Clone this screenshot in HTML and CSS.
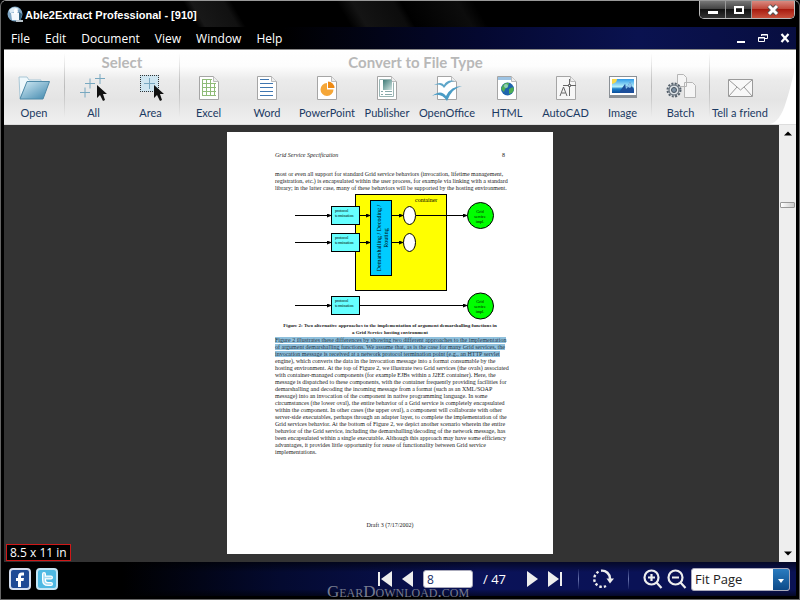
FILE: index.html
```
<!DOCTYPE html>
<html lang="en">
<head>
    <meta charset="UTF-8">
    <meta name="viewport" content="width=device-width, initial-scale=1.0">
    <title>Able2Extract Professional - [910]</title>
    <link rel="stylesheet" href="styles.css">
</head>
<body>
    <div class="window">
        <header class="title-bar">
            <svg class="app-icon" width="17" height="17" viewBox="0 0 17 17">
                <circle cx="8" cy="8" r="7.5" fill="#7fa6c4"/>
                <path d="M2 4Q7-1 12 3L8 6 3 7Z" fill="#dcebf5"/>
                <path d="M4 7h8v7H5z" fill="#f4f9fc"/>
                <path d="M7 4l2-2 2 3-1 3H7z" fill="#fff"/>
                <path d="M12 6l3 2-1 6-2 1z" fill="#35627f"/>
                <path d="M9 14h7v2H9z" fill="#b9c4cc"/>
            </svg>
            <h1>Able2Extract Professional - [910]</h1>
            <div class="window-buttons">
                <button class="win-btn" aria-label="Minimize"><svg width="12" height="12" viewBox="0 0 12 12"><path d="M1 7h10v3H1z" fill="#fff"/></svg></button>
                <button class="win-btn" aria-label="Maximize"><svg width="12" height="12" viewBox="0 0 12 12"><path d="M2 3h8v6H2z" fill="none" stroke="#fff" stroke-width="2"/></svg></button>
                <button class="win-btn win-close" aria-label="Close"><svg width="14" height="12" viewBox="0 0 14 12"><path d="M3 2l8 8M11 2l-8 8" stroke="#555" stroke-width="5"/><path d="M3 2l8 8M11 2l-8 8" stroke="#fff" stroke-width="3"/></svg></button>
            </div>
        </header>

        <nav class="menu-bar">
            <ul class="menu-list">
                <li><a href="#">File</a></li>
                <li><a href="#">Edit</a></li>
                <li><a href="#">Document</a></li>
                <li><a href="#">View</a></li>
                <li><a href="#">Window</a></li>
                <li><a href="#">Help</a></li>
            </ul>
            <div class="mdi-buttons">
                <button aria-label="Minimize document"><svg width="10" height="10" viewBox="0 0 10 10"><path d="M1 8h8v2H1z" fill="#fff"/></svg></button>
                <button aria-label="Restore document"><svg width="10" height="10" viewBox="0 0 10 10"><path d="M3.5 3V1.5h6v4H7M.5 4.5h6v4h-6zM0 5h7M3 2h7" fill="none" stroke="#fff"/></svg></button>
                <button aria-label="Close document"><svg width="10" height="10" viewBox="0 0 10 10"><path d="M1.5 1l7 8M8.5 1l-7 8" stroke="#fff" stroke-width="2.2"/></svg></button>
            </div>
        </nav>

        <div class="toolbar">
            <section class="tool-group">
                <h2></h2>
                <div class="tools">
                    <button class="tool">
                        <svg width="32" height="28" viewBox="0 0 32 28">
                            <defs><linearGradient id="folder" x1="0" y1="0" x2="1" y2="1"><stop offset="0" stop-color="#d5edf7"/><stop offset="1" stop-color="#3e86ac"/></linearGradient></defs>
                            <path d="M1 3h8l2 3h12v4H9L2 24z" fill="#eef8fc" stroke="#a9c7d6"/>
                            <path d="M9 7.5h22.5L25 25H2z" fill="url(#folder)" stroke="#4f8aa8"/>
                        </svg>
                        <span>Open</span>
                    </button>
                </div>
            </section>
            <section class="tool-group">
                <h2>Select</h2>
                <div class="tools">
                    <button class="tool narrow">
                        <svg width="32" height="28" viewBox="0 0 32 28">
                            <path d="M2 18.5h10M7 13.5v10M7 9.5h10M12 4.5v10M17 4.5h10M22 0v10" stroke="#78a8c0"/>
                            <path d="M19 11v13l3-3 3 6 2-1-2-6h4z" fill="#111"/>
                        </svg>
                        <span>All</span>
                    </button>
                    <button class="tool narrow">
                        <svg width="32" height="28" viewBox="0 0 32 28">
                            <path d="M5 1h19v17H5z" fill="#cfe6f1"/>
                            <path d="M5 1.5h19M5 17.5h19M5.5 1v17M23.5 1v17" stroke="#333" stroke-dasharray="1 1"/>
                            <path d="M9 9.5h11M14.5 4v11" stroke="#78a8c0"/>
                            <path d="M19 11v13l3-3 3 6 2-1-2-6h4z" fill="#111"/>
                        </svg>
                        <span>Area</span>
                    </button>
                </div>
            </section>
            <section class="tool-group">
                <h2>Convert to File Type</h2>
                <div class="tools">
                    <button class="tool narrow">
                        <svg width="32" height="28" viewBox="0 0 32 28">
                            <path d="M6.5 2.5h14l5 5v18h-19z" fill="#fff" stroke="#a5a5a5"/><path d="M20.5 2.5v5h5" fill="#eee" stroke="#bbb"/>
                            <path d="M9 5.5h10M9 9.5h14M9 13.5h14M9 17.5h14M9 21.5h14M9.5 5v17M13.5 5v17M17.5 5v17M21.5 9v13" stroke="#8fbb78"/>
                        </svg>
                        <span>Excel</span>
                    </button>
                    <button class="tool">
                        <svg width="32" height="28" viewBox="0 0 32 28">
                            <path d="M6.5 2.5h14l5 5v18h-19z" fill="#fff" stroke="#a5a5a5"/><path d="M20.5 2.5v5h5" fill="#eee" stroke="#bbb"/>
                            <path d="M9 5.5h9M9 9.5h13M9 13.5h13M9 17.5h13M9 21.5h13" stroke="#3f76b0"/>
                        </svg>
                        <span>Word</span>
                    </button>
                    <button class="tool">
                        <svg width="32" height="28" viewBox="0 0 32 28">
                            <path d="M6.5 2.5h14l5 5v18h-19z" fill="#fff" stroke="#a5a5a5"/><path d="M20.5 2.5v5h5" fill="#eee" stroke="#bbb"/>
                            <path d="M16 9a6.5 6.5 0 1 0 6.5 6.5H16z" fill="#f5a637"/>
                            <path d="M17 7.5V14h6.5A6.5 6.5 0 0 0 17 7.5z" fill="#ee8a14"/>
                        </svg>
                        <span>PowerPoint</span>
                    </button>
                    <button class="tool">
                        <svg width="32" height="28" viewBox="0 0 32 28">
                            <defs><linearGradient id="photo" x1="0" y1="0" x2="1" y2="1"><stop offset="0" stop-color="#3f7a77"/><stop offset="1" stop-color="#d3e5e3"/></linearGradient></defs>
                            <path d="M6.5 2.5h14l5 5v18h-19z" fill="#fff" stroke="#a5a5a5"/><path d="M20.5 2.5v5h5" fill="#eee" stroke="#bbb"/>
                            <path d="M20 5.5H8.5v17h14v-14" fill="none" stroke="#9ab5b4"/>
                            <path d="M12 6h9v10h-9z" fill="url(#photo)"/>
                            <path d="M10 17.5h2M14 17.5h7M10 20.5h2M14 20.5h7" stroke="#8aa"/>
                        </svg>
                        <span>Publisher</span>
                    </button>
                    <button class="tool">
                        <svg width="32" height="28" viewBox="0 0 32 28">
                            <path d="M6.5 2.5h14l5 5v18h-19z" fill="#fff" stroke="#a5a5a5"/><path d="M20.5 2.5v5h5" fill="#eee" stroke="#bbb"/>
                            <path d="M3 11q7-4 10 0 3-6 11-4-7 1-11 7-3-5-10-3z" fill="#5ea6c9"/>
                            <path d="M1 22q9-7 14 0 5-10 16-10-10 2-15 15-6-9-15-5z" fill="#4a9cc5"/>
                        </svg>
                        <span>OpenOffice</span>
                    </button>
                    <button class="tool">
                        <svg width="32" height="28" viewBox="0 0 32 28">
                            <path d="M6.5 2.5h14l5 5v18h-19z" fill="#fff" stroke="#a5a5a5"/><path d="M7 3h13v3H7z" fill="#9dc3e3"/><path d="M20.5 2.5v5h5" fill="#eee" stroke="#bbb"/>
                            <circle cx="16.5" cy="15" r="6.5" fill="#1e64ad"/>
                            <path d="M12 11q3-3 6-2l-1 4-3 2-1 3-3-3zM18 15l4-2q2 3-1 6l-3 1z" fill="#4fae53"/>
                            <circle cx="15" cy="12" r="2" fill="#b9e3f5" opacity=".6"/>
                        </svg>
                        <span>HTML</span>
                    </button>
                    <button class="tool narrow">
                        <svg width="32" height="28" viewBox="0 0 32 28">
                            <path d="M6.5 2.5h14l5 5v18h-19z" fill="#f7f7f7" stroke="#a5a5a5"/><path d="M20.5 2.5v5h5" fill="#eee" stroke="#bbb"/>
                            <path d="M13 11.5h13M19.5 5v17" stroke="#666"/><path d="M18.5 10.5h2v2h-2z" fill="#fff" stroke="#666"/>
                            <path d="M10 22l3.5-9 3.5 9M11.5 19h4" fill="none" stroke="#666"/>
                        </svg>
                        <span>AutoCAD</span>
                    </button>
                    <button class="tool narrow">
                        <svg width="32" height="28" viewBox="0 0 32 28">
                            <defs><linearGradient id="sky" x1="0" y1="0" x2="0" y2="1"><stop offset="0" stop-color="#2f9ae8"/><stop offset=".55" stop-color="#b5f0fa"/><stop offset=".7" stop-color="#1d7fc8"/><stop offset="1" stop-color="#0b4f9c"/></linearGradient></defs>
                            <path d="M2 2h28v22H2z" fill="#8a9096"/><path d="M3 3h26v18H3z" fill="#fff"/>
                            <path d="M5 5h22v14H5z" fill="url(#sky)"/>
                            <path d="M5 5h5q0 4-5 5z" fill="#f7d84a"/>
                            <path d="M13 17l5-7 2 3 3-5 4 8v3H13z" fill="#1d4f9b"/><path d="M18 10l2 3 3-5 2 4-2 2-2-1-2 2z" fill="#8fc5ea"/>
                        </svg>
                        <span>Image</span>
                    </button>
                </div>
            </section>
            <section class="tool-group">
                <h2></h2>
                <div class="tools">
                    <button class="tool narrow">
                        <svg width="32" height="28" viewBox="0 0 32 28">
                            <path d="M12.5.5h6l3 3v9h-9zM19.5 8.5h8l3 3v12h-11z" fill="#f5f5f5" stroke="#b5b5b5"/>
                            <circle cx="9" cy="16" r="6.5" fill="#cdd3d8" stroke="#56616c" stroke-width="2" stroke-dasharray="2 1.4"/>
                            <circle cx="9" cy="16" r="5" fill="#dde2e6" stroke="#56616c"/>
                            <circle cx="9" cy="16" r="2.5" fill="#7d90a2" stroke="#46525e"/>
                        </svg>
                        <span>Batch</span>
                    </button>
                </div>
            </section>
            <section class="tool-group">
                <h2></h2>
                <div class="tools">
                    <button class="tool">
                        <svg width="32" height="28" viewBox="0 0 32 28">
                            <path d="M4.5 5.5h24v17h-24z" fill="#f8f8f8" stroke="#9a9a9a"/>
                            <path d="M5 6l11.5 10L28 6M5 22l8-9M28 22l-8-9" fill="none" stroke="#9a9a9a"/>
                        </svg>
                        <span>Tell a friend</span>
                    </button>
                </div>
            </section>
            <svg class="toolbar-curve" width="26" height="60" viewBox="0 0 26 60"><path d="M26 0Q20 26 16 38 10 58 0 60h26z" fill="#fff"/></svg>
        </div>

        <main class="viewer">
            <div class="canvas">
                <article class="page">
                    <div class="page-header"><em>Grid Service Specification</em><span>8</span></div>
                    <p>most or even all support for standard Grid service behaviors (invocation, lifetime management,<br>
                    registration, etc.) is encapsulated within the user process, for example via linking with a standard<br>
                    library; in the latter case, many of these behaviors will be supported by the hosting environment.</p>
                    <svg class="figure" viewBox="0 0 230 130">
                        <defs><marker id="arrow" markerWidth="5" markerHeight="4" refX="4" refY="2" orient="auto" markerUnits="userSpaceOnUse"><path d="M0 0l5 2-5 2z"/></marker></defs>
                        <g stroke="#000">
                            <rect x="80.5" y="2.5" width="91" height="96" fill="#ff0"/>
                            <rect x="56.5" y="14.5" width="28" height="18" fill="#6ff"/>
                            <rect x="56.5" y="41.5" width="28" height="18" fill="#6ff"/>
                            <rect x="56.5" y="104.5" width="28" height="18" fill="#6ff"/>
                            <rect x="95.5" y="8.5" width="21" height="75" fill="#0cf"/>
                            <ellipse cx="134.5" cy="23.5" rx="6" ry="9" fill="#fff"/>
                            <ellipse cx="134.5" cy="50.5" rx="6" ry="9" fill="#fff"/>
                            <circle cx="205.5" cy="23.5" r="13" fill="#0f0"/>
                            <circle cx="205.5" cy="114" r="13" fill="#0f0"/>
                            <path d="M20 23.5h36" marker-end="url(#arrow)"/>
                            <path d="M20 50.5h36" marker-end="url(#arrow)"/>
                            <path d="M20 113.5h36" marker-end="url(#arrow)"/>
                            <path d="M85 23.5h10" marker-end="url(#arrow)"/>
                            <path d="M85 50.5h10" marker-end="url(#arrow)"/>
                            <path d="M117 23.5h11" marker-end="url(#arrow)"/>
                            <path d="M117 50.5h11" marker-end="url(#arrow)"/>
                            <path d="M141 23.5h51" marker-end="url(#arrow)"/>
                            <path d="M85 113.5h107" marker-end="url(#arrow)"/>
                        </g>
                        <text class="fig-label" x="140" y="10">container</text>
                        <g class="fig-small">
                            <text x="60" y="20">protocol</text><text x="60" y="25">termination</text>
                            <text x="60" y="47">protocol</text><text x="60" y="52">termination</text>
                            <text x="60" y="110">protocol</text><text x="60" y="115">termination</text>
                        </g>
                        <g class="fig-small" text-anchor="middle">
                            <text x="205" y="21">Grid</text><text x="205" y="26">service</text><text x="205" y="31">impl.</text>
                            <text x="205" y="111">Grid</text><text x="205" y="116">service</text><text x="205" y="121">impl.</text>
                        </g>
                        <g class="fig-label" text-anchor="middle">
                            <text transform="translate(106 46) rotate(-90)">Demarshalling / Decoding /</text>
                            <text transform="translate(113 46) rotate(-90)">Routing</text>
                        </g>
                    </svg>
                    <p class="caption">Figure 2: Two alternative approaches to the implementation of argument demarshalling functions in<br>
                    a Grid Service hosting environment</p>
                    <p><mark>Figure 2 illustrates these differences by showing two different approaches to the implementation<br>
                    of argument demarshalling functions. We assume that, as is the case for many Grid services, the<br>
                    invocation message is received at a network protocol termination point (e.g., an HTTP servlet</mark><br>
                    engine), which converts the data in the invocation message into a format consumable by the<br>
                    hosting environment. At the top of Figure 2, we illustrate two Grid services (the ovals) associated<br>
                    with container-managed components (for example EJBs within a J2EE container). Here, the<br>
                    message is dispatched to these components, with the container frequently providing facilities for<br>
                    demarshalling and decoding the incoming message from a format (such as an XML/SOAP<br>
                    message) into an invocation of the component in native programming language. In some<br>
                    circumstances (the lower oval), the entire behavior of a Grid service is completely encapsulated<br>
                    within the component. In other cases (the upper oval), a component will collaborate with other<br>
                    server-side executables, perhaps through an adapter layer, to complete the implementation of the<br>
                    Grid services behavior. At the bottom of Figure 2, we depict another scenario wherein the entire<br>
                    behavior of the Grid service, including the demarshalling/decoding of the network message, has<br>
                    been encapsulated within a single executable. Although this approach may have some efficiency<br>
                    advantages, it provides little opportunity for reuse of functionality between Grid service<br>
                    implementations.</p>
                    <div class="page-footer">Draft 3 (7/17/2002)</div>
                </article>
                <div class="page-size">8.5 x 11 in</div>
            </div>
            <div class="scrollbar">
                <button aria-label="Scroll up"><svg width="8" height="5" viewBox="0 0 8 5"><path d="M0 4.5L4 .5l4 4z"/></svg></button>
                <div class="scroll-track"><div class="scroll-thumb"></div></div>
                <button aria-label="Scroll down"><svg width="8" height="5" viewBox="0 0 8 5"><path d="M0 .5h8l-4 4z"/></svg></button>
            </div>
        </main>

        <footer class="status-bar">
            <div class="social">
                <a href="#" aria-label="Facebook"><svg width="22" height="22" viewBox="0 0 22 22"><rect x="1" y="1" width="20" height="20" rx="3" fill="#1e4a95" stroke="#d5dff0" stroke-width="2"/><path d="M15 4.5h-2q-4 0-4 4V10H7v3h2v6h3v-6h2.5l.5-3h-3V8.5q0-1 1-1h2z" fill="#fff"/></svg></a>
                <a href="#" aria-label="Twitter"><svg width="22" height="22" viewBox="0 0 22 22"><rect x="1" y="1" width="20" height="20" rx="3" fill="#4fb9e3" stroke="#c5e6f5" stroke-width="2"/><path d="M8 6v6q0 4 4 4h3M8 9.5h7" fill="none" stroke="#fff" stroke-width="4" stroke-linecap="round"/><path d="M8 6v6q0 4 4 4h3M8 9.5h7" fill="none" stroke="#a5dcf2" stroke-width="1.5" stroke-linecap="round"/></svg></a>
            </div>
            <div class="pager">
                <button aria-label="First page"><svg width="14" height="16" viewBox="0 0 14 16"><path d="M0 1h2v14H0zM14 0v16L3 8z" fill="#eee"/></svg></button>
                <button aria-label="Previous page"><svg width="11" height="16" viewBox="0 0 11 16"><path d="M11 0v16L0 8z" fill="#eee"/></svg></button>
                <input class="page-input" type="text" value="8" aria-label="Page">
                <span class="page-total">/ 47</span>
                <button aria-label="Next page"><svg width="11" height="16" viewBox="0 0 11 16"><path d="M0 0v16l11-8z" fill="#eee"/></svg></button>
                <button aria-label="Last page"><svg width="14" height="16" viewBox="0 0 14 16"><path d="M12 1h2v14h-2zM0 0v16l11-8z" fill="#eee"/></svg></button>
            </div>
            <div class="rotate">
                <button aria-label="Rotate"><svg width="21" height="20" viewBox="0 0 21 20"><path d="M8 1.7a8 8 0 0 1 9 8.3" fill="none" stroke="#eee" stroke-width="2.4"/><path d="M13.5 9.5H21l-4 5z" fill="#eee"/><path d="M5.5 2.8a8 8 0 0 0 7.5 14.2" fill="none" stroke="#eee" stroke-width="2.4" stroke-dasharray="2.5 2"/></svg></button>
            </div>
            <div class="zoom">
                <button aria-label="Zoom in"><svg width="20" height="20" viewBox="0 0 20 20"><circle cx="8.5" cy="8.5" r="7" fill="none" stroke="#eee" stroke-width="2.2"/><path d="M13.5 13.5l5 5.5M5 8.5h7M8.5 5v7" stroke="#eee" stroke-width="2.2"/></svg></button>
                <button aria-label="Zoom out"><svg width="20" height="20" viewBox="0 0 20 20"><circle cx="8.5" cy="8.5" r="7" fill="none" stroke="#eee" stroke-width="2.2"/><path d="M13.5 13.5l5 5.5M5 8.5h7" stroke="#eee" stroke-width="2.2"/></svg></button>
                <div class="zoom-select">
                    <select aria-label="Zoom level"><option>Fit Page</option></select>
                    <svg width="6" height="4" viewBox="0 0 6 4"><path d="M0 0h6L3 4z" fill="#fff"/></svg>
                </div>
            </div>
        </footer>
        <div class="watermark">GearDownload.com</div>
    </div>
</body>
</html>
```
FILE: styles.css
```
* {
    box-sizing: border-box;
}

body {
    margin: 0;
    background-color: #000;
    font-family: "Open Sans", "Noto Sans", sans-serif;
    font-size: 12px;
}

h1, h2, p, ul {
    margin: 0;
    padding: 0;
}

button {
    padding: 0;
    border: none;
    background: none;
    font-family: inherit;
}

svg {
    display: block;
}

.window {
    position: relative;
    display: flex;
    flex-direction: column;
    height: 100vh;
    padding: 0 3px 3px;
    border: 1px solid #666;
    border-top-color: #999;
    border-radius: 6px 6px 0 0;
    background-color: #000;
}

/* Title bar */
.title-bar {
    display: flex;
    align-items: center;
    height: 26px;
    padding-left: 3px;
    background: linear-gradient(60deg, #000 24%, #181818 25%, #111 29%, #000 30%, #000 43%, #141414 45%, #0c0c0c 50%, #000 51%, #0c0c0c 58%, #000 60%);
}

.title-bar h1 {
    flex: 1;
    margin-left: 1px;
    padding-top: 2px;
    color: #fff;
    font: bold 11px "Liberation Sans", sans-serif;
}

.window-buttons {
    display: flex;
    align-self: flex-start;
    margin-right: 1px;
    border: 1px solid #bbb;
    border-top: none;
    border-radius: 0 0 5px 5px;
    overflow: hidden;
}

.win-btn {
    display: flex;
    align-items: center;
    justify-content: center;
    width: 26px;
    height: 17px;
    border-right: 1px solid #999;
    background: linear-gradient(#777, #444 45%, #111 50%, #333);
}

.win-btn.win-close {
    width: 42px;
    border-right: none;
    background: linear-gradient(#d98a80, #c24a3c 45%, #a81c10 50%, #c8503c);
}

/* Menu */
.menu-bar {
    display: flex;
    align-items: center;
    justify-content: space-between;
    height: 22px;
    padding: 0 6px 0 7px;
    background: linear-gradient(to right, #000 35%, #040830 60%, #0a1250 80%, #080e40);
}

.menu-list {
    display: flex;
    gap: 15px;
    list-style: none;
}

.menu-list a {
    color: #fff;
    font-size: 12px;
    text-decoration: none;
}

.mdi-buttons {
    display: flex;
    gap: 12px;
}

/* Toolbar */
.toolbar {
    display: flex;
    height: 76px;
    border-top: 1px solid #888;
    border-bottom: 1px solid #ddd;
    background: linear-gradient(#fff 0, #fdfdfd 16px, #ebebeb 30px, #e4e4e4 50px, #f0f0f0);
    font-family: Lato, sans-serif;
}

.tool-group {
    flex-shrink: 0;
    padding-top: 4px;
}

.tool-group + .tool-group {
    border-left: 1px solid;
    border-image: linear-gradient(transparent 5%, #bbb 50%, transparent 90%) 1;
}

.tool-group h2 {
    height: 17px;
    color: #b8b8b8;
    font-size: 15px;
    line-height: 16px;
    text-align: center;
}

.tools {
    display: flex;
}

.tool {
    display: flex;
    flex-direction: column;
    align-items: center;
    gap: 4px;
    width: 60px;
    padding-top: 3px;
    color: #1b3a63;
    font-size: 11px;
    line-height: 14px;
    white-space: nowrap;
}

.tool.narrow {
    width: 57px;
}

.toolbar-curve {
    margin-left: auto;
    align-self: flex-end;
    flex-shrink: 0;
}

/* Document view */
.viewer {
    display: flex;
    flex: 1;
    min-height: 0;
}

.canvas {
    position: relative;
    display: flex;
    flex: 1;
    justify-content: center;
    padding: 7px 3px 8px 0;
    background-color: #333;
}

.page {
    display: flex;
    flex-direction: column;
    height: 100%;
    min-width: 0;
    aspect-ratio: 326 / 422;
    padding: 20px 48px 25px;
    background-color: #fff;
    color: #222;
    font-family: "Liberation Serif", serif;
    font-size: 6px;
    line-height: 7px;
    white-space: nowrap;
}

.page-header {
    display: flex;
    justify-content: space-between;
    margin-bottom: 12px;
}

.figure {
    width: 100%;
    flex-shrink: 0;
}

.fig-label {
    font-size: 6px;
}

.fig-small {
    font-size: 4px;
}

.caption {
    margin-bottom: 1px;
    font-size: 5px;
    font-weight: bold;
    text-align: center;
}

.page mark {
    background-color: #8fc0dc;
    color: #234;
}

.page-footer {
    margin-top: auto;
    text-align: center;
}

.page-size {
    position: absolute;
    left: 2px;
    bottom: 1px;
    padding: 0 3px;
    border: 1px solid #d01818;
    background-color: #000;
    color: #fff;
    font-size: 12px;
    line-height: 15px;
}

.scrollbar {
    display: flex;
    flex-direction: column;
    width: 17px;
    background-color: #eee;
}

.scrollbar button {
    display: flex;
    align-items: center;
    justify-content: center;
    height: 17px;
}

.scroll-track {
    flex: 1;
    padding: 60px 1px 0;
}

.scroll-thumb {
    height: 6px;
    border: 1px solid #999;
    border-radius: 1px;
    background: linear-gradient(to right, #fff, #ccc);
}

/* Status bar */
.status-bar {
    display: flex;
    align-items: center;
    height: 34px;
    padding: 0 6px 0 5px;
    background: linear-gradient(#0008, transparent 30%, transparent 80%, #0008), linear-gradient(to right, #000 15%, #040a30 35%, #0a1258 60%, #0a1254);
}

.social {
    display: flex;
    gap: 5px;
    margin-right: auto;
}

.pager {
    display: flex;
    align-items: center;
    gap: 10px;
}

.page-input {
    width: 50px;
    height: 18px;
    padding: 0 3px;
    border: 1px solid #aab;
    border-radius: 3px;
    background-color: #fff;
    color: #1b2f66;
    font: 12px "Open Sans", sans-serif;
}

.page-total {
    width: 34px;
    color: #fff;
    font-size: 13px;
}

.rotate {
    display: flex;
    margin: 0 14px 0 16px;
    padding: 0 14px;
    border: 1px solid;
    border-width: 0 1px;
    border-image: linear-gradient(transparent, #6a75b0, transparent) 1;
}

.zoom {
    display: flex;
    align-items: center;
    gap: 4px;
}

.zoom-select {
    position: relative;
}

.zoom-select select {
    width: 99px;
    height: 23px;
    padding: 0 3px;
    border: 1px solid #aab;
    border-radius: 3px;
    appearance: none;
    background: linear-gradient(#2a7cc0, #0d4a88) right / 16px 100% no-repeat #fff;
    color: #222;
    font: 13px "Open Sans", sans-serif;
}

.zoom-select svg {
    position: absolute;
    right: 6px;
    top: 11px;
    pointer-events: none;
}

.watermark {
    position: absolute;
    left: 50%;
    bottom: 0;
    margin-left: -73px;
    color: #777c90;
    font-family: "Liberation Serif", serif;
    font-size: 17px;
    font-variant: small-caps;
    line-height: 14px;
    pointer-events: none;
}
```
